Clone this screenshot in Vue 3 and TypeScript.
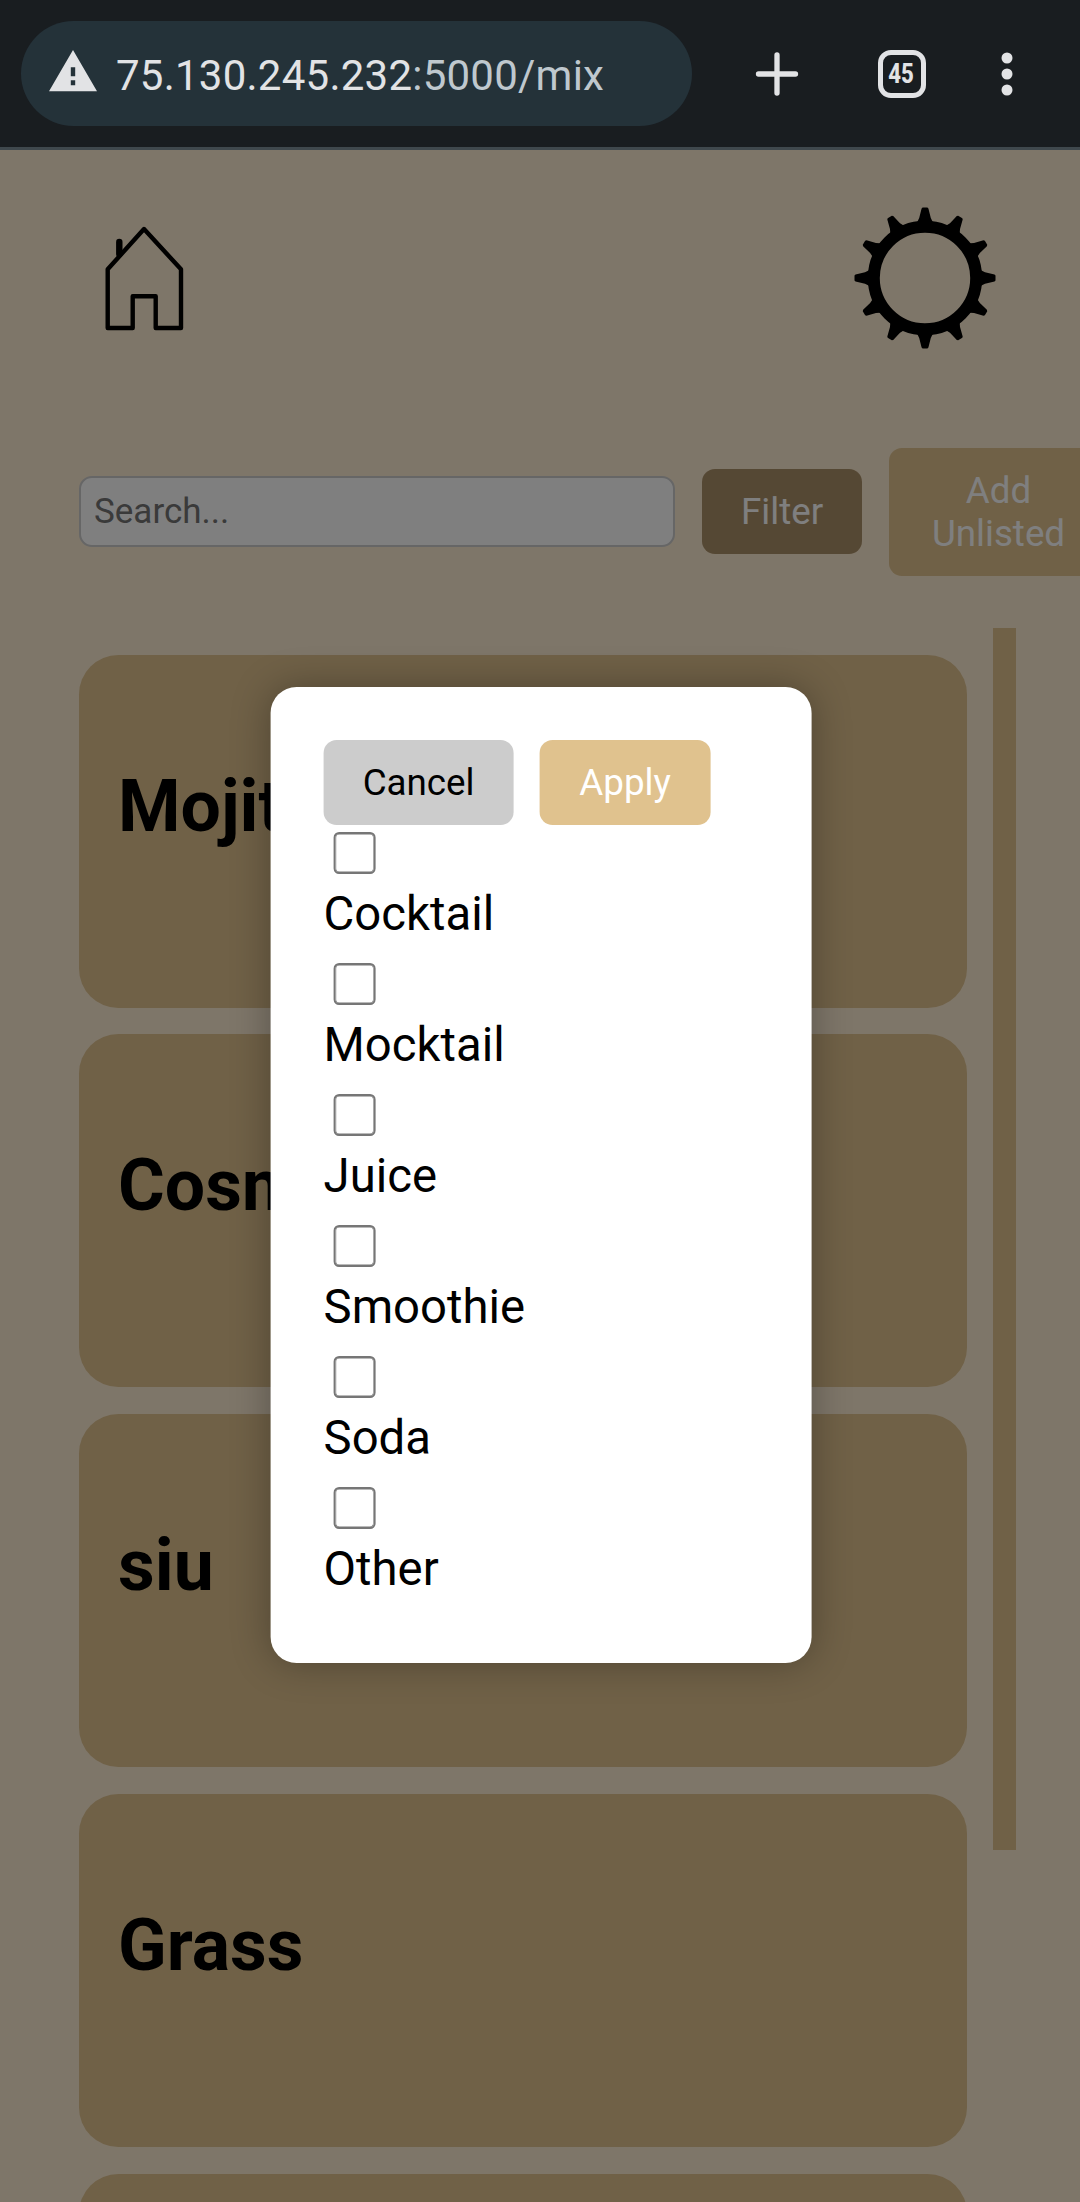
<script setup lang="ts">
import { ref } from 'vue'

interface Drink {
  id: number
  name: string
}

const drinks: Drink[] = [
  { id: 1, name: 'Mojito' },
  { id: 2, name: 'Cosmo' },
  { id: 3, name: 'siu' },
  { id: 4, name: 'Grass' },
  { id: 5, name: '' },
]

const categories: string[] = ['Cocktail', 'Mocktail', 'Juice', 'Smoothie', 'Soda', 'Other']
const selected = ref<string[]>([])
const search = ref<string>('')
const teeth: number[] = Array.from({ length: 12 }, (_, i) => i * 30)
</script>

<template>
  <div class="screen">
    <header class="toolbar">
      <div class="address">
        <svg class="warn" width="48" height="42" viewBox="0 0 48 42">
          <path fill="#e2e3e5" fill-rule="evenodd" d="M24 0 48 41.200H0ZM21.800 17.200V26.200H26.200V17.200ZM21.800 30.300V35.200H26.200V30.300Z" />
        </svg>
        <span class="url">75.130.245.232<span class="path">:5000/mix</span></span>
      </div>
      <svg class="plus" width="44" height="44" viewBox="0 0 44 44">
        <path d="M22 3V41M3.500 22H40.500" stroke="#e2e3e5" stroke-width="5.300" stroke-linecap="round" />
      </svg>
      <div class="tabs"><span>45</span></div>
      <svg class="dots" width="12" height="44" viewBox="0 0 12 44" fill="#e2e3e5">
        <circle cx="6" cy="6" r="5.500" /><circle cx="6" cy="22" r="5.500" /><circle cx="6" cy="38" r="5.500" />
      </svg>
    </header>

    <main class="page">
      <nav class="nav">
        <svg class="home" width="80" height="106" viewBox="0 0 80 106" fill="none" stroke="#000" stroke-linejoin="round" stroke-linecap="round">
          <path stroke-width="4.400" d="M40 4 77 44.300V103H51.700V71.300H28.700V103H3.700V44.300Z" />
          <path stroke-width="6.400" d="M15.300 17V29" />
        </svg>
        <svg class="gear" width="142" height="142" viewBox="-71 -71 142 142">
          <circle r="51.200" fill="none" stroke="#000" stroke-width="12" />
          <path
            v-for="angle in teeth"
            :key="angle"
            d="M-11-52-7.500-56.500-5.800-60-3.400-69.500-2.400-70.500H2.400L3.400-69.500 5.800-60 7.500-56.500 11-52Z"
            :transform="`rotate(${angle})`"
          />
        </svg>
      </nav>

      <div class="controls">
        <input v-model="search" class="search" type="text" placeholder="Search..." />
        <button class="btn filter">Filter</button>
        <button class="btn add">Add<br />Unlisted</button>
      </div>

      <div class="content">
        <section class="list">
          <article v-for="drink in drinks" :key="drink.id" class="card">
            <h2>{{ drink.name }}</h2>
          </article>
        </section>
        <div class="track"></div>
      </div>

      <div class="overlay">
        <div class="modal">
          <div class="actions">
            <button class="btn cancel">Cancel</button>
            <button class="btn apply">Apply</button>
          </div>
          <label v-for="category in categories" :key="category" class="option">
            <input v-model="selected" type="checkbox" :value="category" />
            <span>{{ category }}</span>
          </label>
        </div>
      </div>
    </main>
  </div>
</template>

<style>
body {
  margin: 0;
  overflow: hidden;
}
</style>

<style scoped>
* {
  box-sizing: border-box;
}

.screen {
  display: flex;
  flex-direction: column;
  width: 1080px;
  height: 2202px;
  overflow: hidden;
  font-family: Roboto, 'Liberation Sans', sans-serif;
  color: #000;
}

.toolbar {
  display: flex;
  flex: none;
  align-items: center;
  height: 150px;
  padding-left: 21px;
  background: #191d20;
  border-bottom: 3px solid #3f484d;
}

.address {
  display: flex;
  align-items: center;
  width: 671px;
  height: 105px;
  padding-left: 28px;
  border-radius: 53px;
  background: #243239;
}

.warn {
  position: relative;
  top: -3px;
}

.url {
  position: relative;
  top: 2px;
  margin-left: 19px;
  font-size: 42px;
  line-height: 50px;
  letter-spacing: 0.24px;
  color: #e2e3e5;
}

.path {
  color: #bfc8ce;
}

.plus {
  margin-left: 62.500px;
}

.tabs {
  display: flex;
  align-items: center;
  justify-content: center;
  width: 48px;
  height: 48px;
  margin-left: 79px;
  border: 5.3px solid #e2e3e5;
  border-radius: 13px;
}

.tabs span {
  font-size: 27px;
  font-weight: 800;
  line-height: 30px;
  color: #e2e3e5;
  transform: translateX(-0.5px) scaleX(0.82);
}

.dots {
  margin-left: 75px;
}

.page {
  position: relative;
  flex: 1;
  min-height: 0;
  overflow: hidden;
  background: #fdecd2;
}

.nav {
  display: flex;
  justify-content: space-between;
  height: 298px;
  padding: 57px 84.500px 0 104px;
}

.home {
  margin-top: 18px;
}

.controls {
  display: flex;
  align-items: center;
  width: 1108px;
  height: 128px;
  padding-left: 79px;
}

.search {
  flex: none;
  width: 596px;
  height: 71px;
  margin-bottom: 1px;
  padding: 0 13px;
  border: 2px solid #ccc;
  border-radius: 13px;
  background: #fff;
  font-family: inherit;
  font-size: 35px;
}

.search::placeholder {
  color: #757575;
}

.btn {
  flex: none;
  height: 85px;
  padding: 0 39px;
  border: 0;
  border-radius: 13px;
  font-family: inherit;
  font-size: 36.750px;
  line-height: 43px;
  color: #fff;
}

.filter {
  width: 160px;
  margin-bottom: 1px;
  margin-left: 27px;
  background: #ab9068;
}

.add {
  width: 219px;
  height: 128px;
  margin-left: 27px;
  background: #e0c28e;
}

.content {
  display: flex;
  margin-top: 52px;
  padding-left: 79px;
}

.list {
  display: flex;
  flex-direction: column;
  gap: 26.800px;
  width: 888px;
  padding-top: 26.700px;
}

.card {
  flex: none;
  height: 353px;
  padding: 109px 39px 0;
  border-radius: 39.400px;
  background: #e0c28e;
}

.card h2 {
  margin: 0;
  font-size: 71.500px;
  line-height: 86px;
}

.track {
  width: 23px;
  height: 1222px;
  margin-left: 26px;
  background: #e0c28e;
}

.overlay {
  position: absolute;
  inset: 0;
  background: rgba(0, 0, 0, 0.5);
}

.modal {
  position: absolute;
  top: 537px;
  left: 270px;
  width: 541px;
  height: 976px;
  padding: 53px;
  border-radius: 26px;
  background: #fff;
  box-shadow: 0 0 39px rgba(0, 0, 0, 0.3);
  transform: translateX(0.600px);
}

.actions {
  display: flex;
  gap: 26px;
}

.cancel {
  width: 190px;
  background: #ccc;
  color: #000;
}

.apply {
  width: 171px;
  background: #e0c28e;
}

.option {
  display: flex;
  flex-direction: column;
  height: 131px;
  padding-top: 7px;
}

.option input {
  appearance: none;
  flex: none;
  width: 42px;
  height: 42px;
  margin: 0 0 0 10px;
  border: 2px solid #767676;
  border-radius: 5.500px;
  background: #fff;
  box-shadow: inset 0 0 0 0.600px #767676;
}

.option span {
  margin-top: 12px;
  font-size: 47.250px;
  line-height: 56px;
}
</style>
